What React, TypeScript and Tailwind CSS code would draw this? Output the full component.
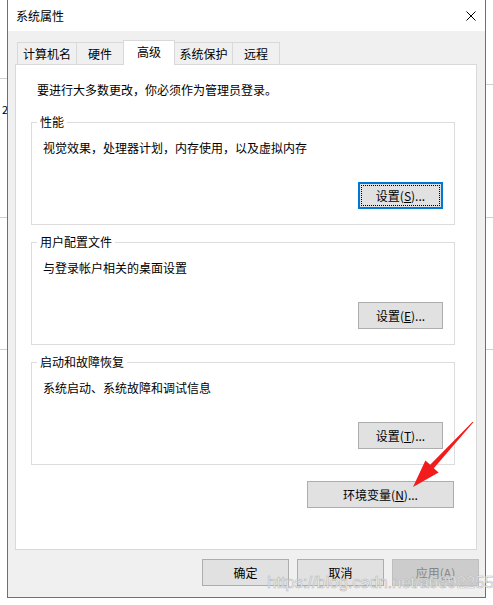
import React from "react";

// Windows "系统属性" dialog, 高级 tab
const tabs = [
  { label: "计算机名", w: "w-[60px]", active: false },
  { label: "硬件", w: "w-[48px]", active: false },
  { label: "高级", w: "w-[52px]", active: true },
  { label: "系统保护", w: "w-[59px]", active: false },
  { label: "远程", w: "w-[48px]", active: false },
];

function WinButton({
  children,
  className,
  focused,
  disabled,
}: {
  children: React.ReactNode;
  className: string;
  focused?: boolean;
  disabled?: boolean;
}) {
  if (focused) {
    return (
      <div className={`${className} h-[27px] border-2 border-[#0078d7] bg-[#e1e1e1] p-[1px]`}>
        <div className="flex h-full w-full items-center justify-center border border-dotted border-black">
          {children}
        </div>
      </div>
    );
  }
  if (disabled) {
    return (
      <div
        className={`${className} flex h-[27px] items-center justify-center border border-[#bfbfbf] bg-[#cccccc] text-[#858585]`}
      >
        {children}
      </div>
    );
  }
  return (
    <div
      className={`${className} flex h-[27px] items-center justify-center border border-[#adadad] bg-[#e1e1e1]`}
    >
      {children}
    </div>
  );
}

function Group({
  title,
  desc,
  btn,
  focused,
}: {
  title: string;
  desc: string;
  btn: React.ReactNode;
  focused?: boolean;
}) {
  return (
    <fieldset className="w-[424px] border border-[#dcdcdc] pb-[15px]">
      <legend className="ml-[5px] px-[3px] leading-[16px]">{title}</legend>
      <div className="mt-[10px] pl-[11px] leading-[16px]">{desc}</div>
      <div className="mt-[26px] flex justify-end pr-[11px]">
        <WinButton className="w-[85px]" focused={focused}>
          {btn}
        </WinButton>
      </div>
    </fieldset>
  );
}

export default function App() {
  return (
    <div className="relative h-[605px] w-[493px] overflow-hidden bg-white font-['Noto_Sans_CJK_SC','Microsoft_YaHei',sans-serif] text-[12px] text-black">
      {/* desktop behind the dialog */}
      <div className="absolute left-0 top-[78px] h-px w-[8px] bg-[#d0d0d0]" />
      <div className="absolute left-0 top-[217px] h-px w-[8px] bg-[#d0d0d0]" />
      <div className="absolute left-0 top-[349px] h-px w-[8px] bg-[#d0d0d0]" />
      <div className="absolute right-0 top-[84px] h-px w-[8px] bg-[#d0d0d0]" />
      <div className="absolute right-0 top-[217px] h-px w-[8px] bg-[#d0d0d0]" />
      <div className="absolute right-0 top-[349px] h-px w-[8px] bg-[#d0d0d0]" />
      <div className="absolute left-[2px] top-[102px] text-[11px] leading-[14px]">2</div>

      <div className="relative z-10 -mt-px ml-[7px] flex h-[599px] w-[479px] flex-col border border-[#6f6f6f] bg-[#f0f0f0]">
        {/* title bar */}
        <div className="flex h-[31px] items-center justify-between bg-white pl-[8px] pr-[9px]">
          <span className="leading-[16px]">系统属性</span>
          <svg width="10" height="10" viewBox="0 0 10 10">
            <path d="M0.5 0.5 L9.5 9.5 M9.5 0.5 L0.5 9.5" stroke="#000" strokeWidth="1" />
          </svg>
        </div>

        <div className="px-[7px] pt-[9px]">
          {/* tabs */}
          <div className="ml-[2px] flex h-[24px] items-end">
            {tabs.map((t, i) =>
              t.active ? (
                <div
                  key={t.label}
                  className={`${t.w} relative z-10 -mb-px -ml-px flex h-[25px] items-center justify-center border border-b-0 border-[#d9d9d9] bg-white pb-[2px]`}
                >
                  {t.label}
                </div>
              ) : (
                <div
                  key={t.label}
                  className={`${t.w} ${i === 0 ? "" : "-ml-px"} flex h-[22px] items-center justify-center border border-b-0 border-[#d9d9d9] bg-[#f0f0f0]`}
                >
                  {t.label}
                </div>
              )
            )}
          </div>

          {/* tab page */}
          <div className="flex h-[486px] w-[462px] flex-col border border-[#d9d9d9] bg-white pl-[15px] pt-[17px]">
            <div className="pl-[6px] leading-[16px]">要进行大多数更改，你必须作为管理员登录。</div>
            <div className="mt-[16px]">
              <Group
                title="性能"
                desc="视觉效果，处理器计划，内存使用，以及虚拟内存"
                focused
                btn={
                  <span>
                    设置(<span className="underline">S</span>)...
                  </span>
                }
              />
            </div>
            <div className="mt-[9px]">
              <Group
                title="用户配置文件"
                desc="与登录帐户相关的桌面设置"
                btn={
                  <span>
                    设置(<span className="underline">E</span>)...
                  </span>
                }
              />
            </div>
            <div className="mt-[9px]">
              <Group
                title="启动和故障恢复"
                desc="系统启动、系统故障和调试信息"
                btn={
                  <span>
                    设置(<span className="underline">T</span>)...
                  </span>
                }
              />
            </div>
            <div className="mt-[16px] flex w-[423px] justify-end">
              <WinButton className="w-[147px]">
                <span>
                  环境变量(<span className="underline">N</span>)...
                </span>
              </WinButton>
            </div>
          </div>
        </div>

        {/* dialog buttons */}
        <div className="mt-[9px] flex justify-end gap-[8px] pr-[6px]">
          <WinButton className="w-[87px]">确定</WinButton>
          <WinButton className="w-[87px]">取消</WinButton>
          <WinButton className="w-[87px]" disabled>
            <span>
              应用(<span className="underline">A</span>)
            </span>
          </WinButton>
        </div>
      </div>

      {/* red annotation arrow */}
      <svg className="pointer-events-none absolute left-0 top-0 z-20" width="493" height="605">
        <polygon
          points="473.4,422.3 472.6,421.7 430.2,464.8 425.4,460.4 413,487 438.6,472.6 433.8,468.2"
          fill="#f21c1c"
        />
      </svg>

      {/* watermark */}
      <div className="pointer-events-none absolute left-[267px] top-[573px] z-20 font-['Liberation_Sans',Arial,sans-serif] text-[17px] leading-[20px] tracking-[-0.2px] text-white/70 [-webkit-text-stroke:0.6px_#b8b8b8]">
        https://blog.csdn.net/a6892255
      </div>
    </div>
  );
}
